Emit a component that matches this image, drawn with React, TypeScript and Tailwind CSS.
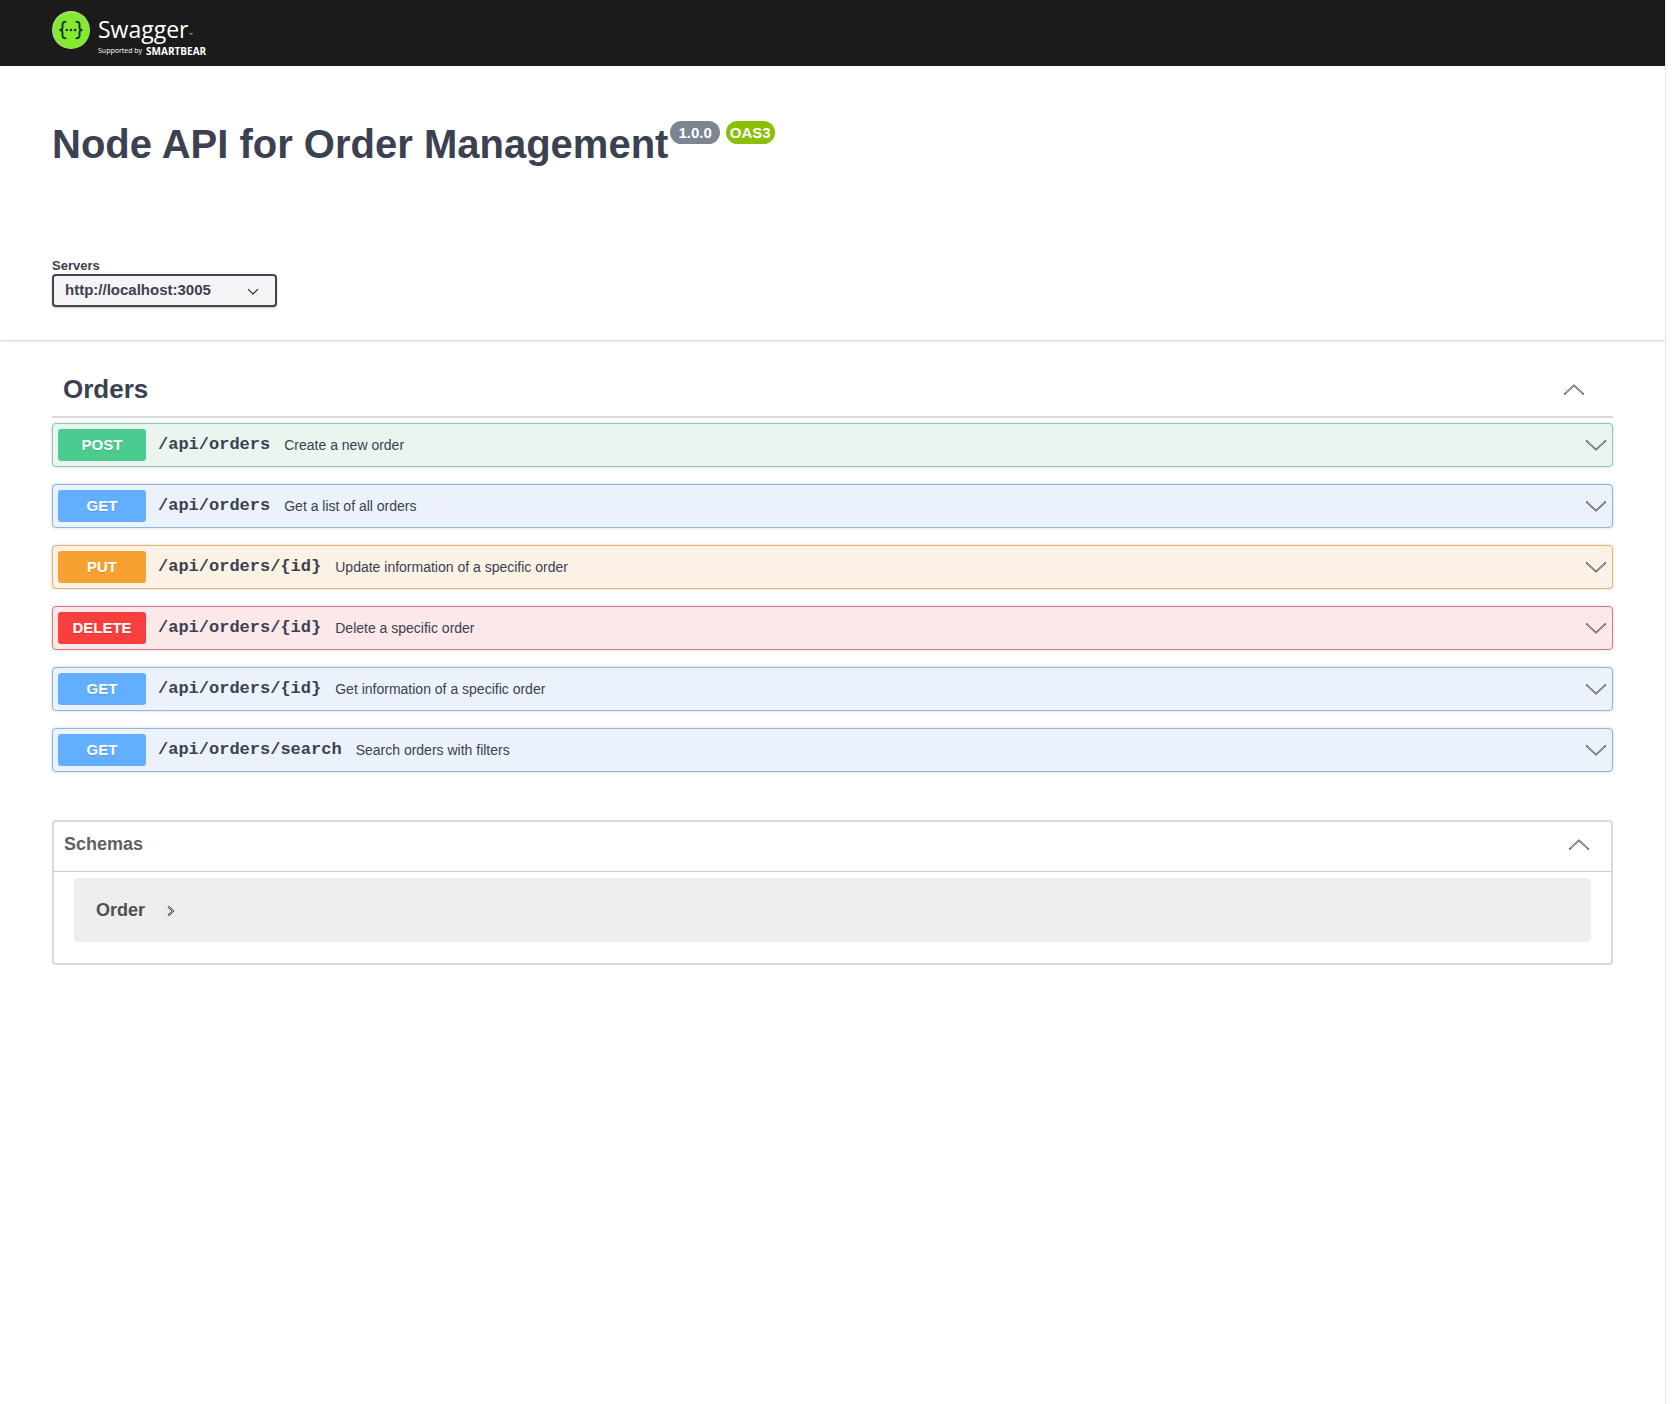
import { useState } from "react";

type Method = "POST" | "GET" | "PUT" | "DELETE";

const operations: { method: Method; path: string; summary: string }[] = [
  { method: "POST", path: "/api/orders", summary: "Create a new order" },
  { method: "GET", path: "/api/orders", summary: "Get a list of all orders" },
  { method: "PUT", path: "/api/orders/{id}", summary: "Update information of a specific order" },
  { method: "DELETE", path: "/api/orders/{id}", summary: "Delete a specific order" },
  { method: "GET", path: "/api/orders/{id}", summary: "Get information of a specific order" },
  { method: "GET", path: "/api/orders/search", summary: "Search orders with filters" },
];

const rowStyle: Record<Method, string> = {
  POST: "border-[#86cfaa] bg-[#eaf5ef]",
  GET: "border-[#8bb8e4] bg-[#ebf2fb]",
  PUT: "border-[#eab368] bg-[#fbf1e5]",
  DELETE: "border-[#d67c7c] bg-[#fce8e8]",
};

const badgeStyle: Record<Method, string> = {
  POST: "bg-[#4acc90]",
  GET: "bg-[#61affe]",
  PUT: "bg-[#f9a130]",
  DELETE: "bg-[#f93e3e]",
};

function Chevron({ className = "" }: { className?: string }) {
  return (
    <svg viewBox="0 0 20 11" className={`h-[11px] w-5 shrink-0 ${className}`} fill="none" aria-hidden="true">
      <path d="M0.8 1 10 9.8 19.2 1" stroke="#1a1a1a" strokeWidth="1.5" strokeLinecap="round" strokeLinejoin="round" />
      <path d="M1.2 1.3 10 9.7 18.8 1.3" stroke="#f0f0f0" strokeWidth="0.7" />
    </svg>
  );
}

function Logo() {
  return (
    <a href="#" className="flex items-start gap-2 text-white" aria-label="Swagger, supported by SmartBear">
      <svg viewBox="0 0 38 38" className="h-[38px] w-[38px]" aria-hidden="true">
        <circle cx="19" cy="19" r="19" fill="#a3d78b" />
        <circle cx="19.4" cy="19.4" r="18" fill="#85ea2d" />
        <g stroke="#173647" strokeWidth="2" fill="none" strokeLinecap="round" strokeLinejoin="round">
          <path d="M13.5 10.8c-2.5 0-3 .8-3 3v2.4c0 1.8-.7 2.8-2.3 2.8 1.6 0 2.3 1 2.3 2.8v2.4c0 2.2.5 3 3 3" />
          <path d="M24.5 10.8c2.5 0 3 .8 3 3v2.4c0 1.8.7 2.8 2.3 2.8-1.6 0-2.3 1-2.3 2.8v2.4c0 2.2-.5 3-3 3" />
        </g>
        <g fill="#173647">
          <circle cx="14.8" cy="19" r="1.3" />
          <circle cx="19" cy="19" r="1.3" />
          <circle cx="23.2" cy="19" r="1.3" />
        </g>
      </svg>
      <span className="flex flex-col gap-0.5 pt-1 font-['Open_Sans',sans-serif]">
        <span className="flex items-end gap-px text-[23px] leading-7">
          Swagger<span className="text-[4px] leading-4">™</span>
        </span>
        <span className="flex items-center gap-1 text-[7px] leading-3">
          Supported by <b className="text-[10px] leading-3">SMARTBEAR</b>
        </span>
      </span>
    </a>
  );
}

export default function App() {
  const [server, setServer] = useState("http://localhost:3005");

  return (
    <div className="flex min-h-screen bg-white font-['Liberation_Sans',Arial,sans-serif] text-[#3b4151]">
      <div className="min-w-0 flex-1">
        <header className="flex h-[66px] items-start bg-[#1b1b1b] px-[52px] pt-[11px]">
          <Logo />
        </header>

        <section className="px-[52px] pt-[54px] pb-[33px] shadow-[0_1px_2px_rgba(0,0,0,0.2)]">
          <div className="flex items-start gap-0.5">
            <h1 className="text-[40px] leading-12 font-bold">Node API for Order Management</h1>
            <div className="mt-px flex gap-1.5 text-[15px] leading-[23px] font-bold text-white">
              <span className="rounded-full bg-[#7d8492] px-2">1.0.0</span>
              <span className="rounded-full bg-[#89bf04] px-1">OAS3</span>
            </div>
          </div>

          <div className="mt-[90px] flex flex-col items-start">
            <label htmlFor="servers" className="text-[13px] leading-4 font-bold">
              Servers
            </label>
            <div className="relative">
              <select
                id="servers"
                value={server}
                onChange={(e) => setServer(e.target.value)}
                className="h-[33px] w-[225px] appearance-none rounded border-2 border-[#41444e] bg-[#f5f5f7] pl-[11px] text-[15px] font-bold shadow-[0_1px_2px_rgba(0,0,0,0.25)]"
              >
                <option>http://localhost:3005</option>
              </select>
              <svg viewBox="0 0 12 8" className="pointer-events-none absolute top-3.5 right-[18px] h-2 w-3" fill="none" aria-hidden="true">
                <path d="M1 1.2 6 6 11 1.2" stroke="#222" strokeWidth="1.1" />
              </svg>
            </div>
          </div>
        </section>

        <main className="px-[52px] pt-5">
          <section>
            <h2>
              <button type="button" aria-expanded="true" className="flex w-full items-center justify-between border-b-2 border-[#dadada] pt-0.5 pr-[29px] pl-[11px] text-[26px] leading-[54px] font-bold">
                Orders
                <Chevron className="rotate-180" />
              </button>
            </h2>
            <ul className="mt-[5px] flex flex-col gap-[17px]">
              {operations.map((op) => (
                <li key={op.method + op.path}>
                  <button
                    type="button"
                    className={`flex h-11 w-full items-center rounded border pr-1.5 pl-[5px] text-left shadow-[0_0_3px_rgba(0,0,0,0.19)] ${rowStyle[op.method]}`}
                  >
                    <span
                      className={`w-[88px] rounded-[3px] text-center text-[15px] leading-8 font-bold text-white [text-shadow:0_1px_0_rgba(0,0,0,0.15)] ${badgeStyle[op.method]}`}
                    >
                      {op.method}
                    </span>
                    <span className="ml-3 font-['Liberation_Mono',monospace] text-[17px] font-bold">{op.path}</span>
                    <span className="ml-3.5 flex-1 text-sm">{op.summary}</span>
                    <Chevron />
                  </button>
                </li>
              ))}
            </ul>
          </section>

          <section className="mt-12 rounded border-2 border-[#dadada] text-[#505050]">
            <h2>
              <button type="button" aria-expanded="true" className="flex w-full items-center justify-between border-b border-[#c8cacc] pr-[22px] pb-1 pl-2.5 text-[18px] leading-[45px] font-bold text-[#606060]">
                Schemas
                <Chevron className="rotate-180" />
              </button>
            </h2>
            <div className="px-5 pt-1.5 pb-[21px]">
              <button type="button" className="flex h-16 w-full items-center gap-[22px] rounded bg-[#eeeeee] px-[22px] text-[18px] font-bold">
                Order
                <svg viewBox="0 0 8 12" className="mt-0.5 h-3 w-2" fill="none" aria-hidden="true">
                  <path d="M1.2 1.5 6 6 1.2 10.5" stroke="#333" strokeWidth="2" />
                  <path d="M1.2 1.5 6 6 1.2 10.5" stroke="#eee" strokeWidth="0.8" />
                </svg>
              </button>
            </div>
          </section>
        </main>
      </div>
      <div className="w-[13px] shrink-0 border-l border-[#e8e8e8]" />
    </div>
  );
}
